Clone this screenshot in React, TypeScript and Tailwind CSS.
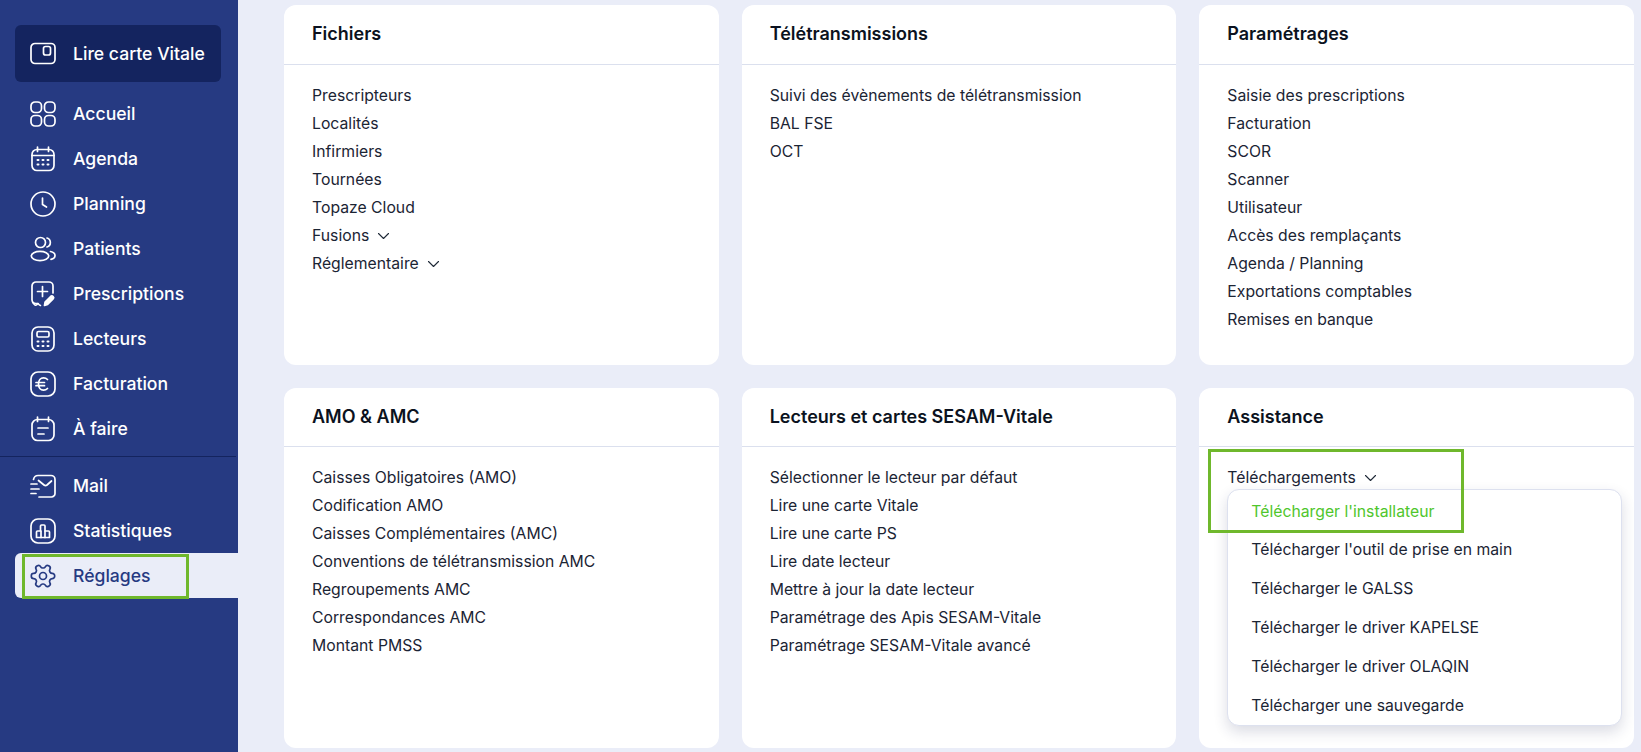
import React from "react";

const S = ({ children }: { children: React.ReactNode }) => (
  <svg width="26" height="26" viewBox="0 0 26 26" fill="none" stroke="currentColor" strokeWidth="1.7" strokeLinecap="round" strokeLinejoin="round" className="shrink-0">
    {children}
  </svg>
);

const icons: Record<string, React.ReactNode> = {
  card: (<S><rect x="1" y="2.500" width="24" height="20" rx="4" /><rect x="13.500" y="5.500" width="7" height="8.500" rx="2" /></S>),
  home: (<S><rect x="1" y="1" width="10.500" height="10.500" rx="4" /><rect x="14.500" y="1" width="10.500" height="10.500" rx="4" /><rect x="1" y="14.500" width="10.500" height="10.500" rx="4" /><rect x="14.500" y="14.500" width="10.500" height="10.500" rx="4" /></S>),
  agenda: (<S><rect x="2" y="3.500" width="22" height="21" rx="5" /><path d="M7.500 1v4.500M18.500 1v4.500M2 9.500h22" /><path d="M7.500 14h1M12.500 14h1M17.500 14h1M7.500 18.500h1M12.500 18.500h1M17.500 18.500h1" strokeWidth="2" /></S>),
  clock: (<S><circle cx="13" cy="13" r="12" /><path d="M12.500 7v6.500l4 2.500" /></S>),
  users: (<S><circle cx="10.500" cy="6.500" r="5" /><ellipse cx="10" cy="20" rx="8.700" ry="4.700" /><path d="M17 2a4.700 4.700 0 0 1 0 9M20.500 15.500c3 .6 4.500 2.200 4.500 4s-1.500 3.300-4 3.900" /></S>),
  rx: (<S><path d="M8 22.500H6A4 4 0 0 1 2 19V5a4 4 0 0 1 4-4h13a4 4 0 0 1 4 4v7" /><path d="M2.500 21c.6 1.500 1.500 2.500 2.500 3s2-.2 3-1.500c.8 1 1.500 1.700 2.500 2" strokeWidth="1.500" /><path d="M12.500 5.500v10M7.500 10.500h10" /><path d="M14.500 24.500l.6-3.500 5.500-5.500c.8-.7 1.800-.7 2.500 0s.7 1.800 0 2.500l-5.500 5.500z" fill="currentColor" /></S>),
  calc: (<S><rect x="2" y="1" width="22" height="24" rx="6" /><rect x="7" y="5.500" width="12" height="5.500" rx="1.500" /><path d="M7.500 15.500h1M12.500 15.500h1M17.500 15.500h1M7.500 20h1M12.500 20h1M17.500 20h1" strokeWidth="2" /></S>),
  euro: (<S><rect x="1" y="1" width="24" height="24" rx="7" /><path d="M17.500 8.500a5.500 5.500 0 0 0-4-1.700c-3 0-5 2.700-5 6.200s2 6.200 5 6.200a5.500 5.500 0 0 0 4-1.700M6 11.500h8.500M6 14.700h8.500" /></S>),
  todo: (<S><rect x="2" y="3.500" width="22" height="21" rx="5.500" /><path d="M7.500 1v4.500M18.500 1v4.500M8 12h10M8 18h6" /></S>),
  mail: (<S><path d="M3.500 6.500C4 4 5.500 2.500 8 2.500h13A4 4 0 0 1 25 6.500v14a3.500 3.500 0 0 1-3.500 3.500H9" /><path d="M8.500 7.500l5.500 4.500c1 .8 2 .8 3 0l4.500-4" /><path d="M1 11h6M1 16h8M1 20.500h5" /></S>),
  stats: (<S><rect x="1" y="1" width="24" height="24" rx="7" /><path d="M6.500 19.500h13v-5.500a1 1 0 0 0-1-1h-3.500V8a1 1 0 0 0-1-1h-2.500a1 1 0 0 0-1 1v5H7.500a1 1 0 0 0-1 1z" /><path d="M11 13v6.500M15 13v6.500" /></S>),
  gear: (<svg width="28" height="28" viewBox="0 0 24 24" fill="none" stroke="currentColor" strokeWidth="1.450" strokeLinecap="round" strokeLinejoin="round" className="-mx-px shrink-0"><g transform="rotate(90 12 12)"><circle cx="12" cy="12" r="3" /><path d="M12.220 2h-.44a2 2 0 0 0-2 2v.18a2 2 0 0 1-1 1.730l-.43.25a2 2 0 0 1-2 0l-.15-.08a2 2 0 0 0-2.730.73l-.22.38a2 2 0 0 0 .73 2.730l.15.1a2 2 0 0 1 1 1.720v.51a2 2 0 0 1-1 1.740l-.15.09a2 2 0 0 0-.73 2.730l.22.38a2 2 0 0 0 2.730.73l.15-.08a2 2 0 0 1 2 0l.43.25a2 2 0 0 1 1 1.730V20a2 2 0 0 0 2 2h.44a2 2 0 0 0 2-2v-.18a2 2 0 0 1 1-1.730l.43-.25a2 2 0 0 1 2 0l.15.08a2 2 0 0 0 2.730-.73l.22-.39a2 2 0 0 0-.73-2.730l-.15-.08a2 2 0 0 1-1-1.740v-.5a2 2 0 0 1 1-1.740l.15-.09a2 2 0 0 0 .73-2.730l-.22-.38a2 2 0 0 0-2.730-.73l-.15.08a2 2 0 0 1-2 0l-.43-.25a2 2 0 0 1-1-1.730V4a2 2 0 0 0-2-2z" /></g></svg>),
};

const Chevron = ({ className = "" }: { className?: string }) => (
  <svg width="13" height="8" viewBox="0 0 13 8" fill="none" stroke="#1f2937" strokeWidth="1.100" strokeLinecap="round" strokeLinejoin="round" className={className}>
    <path d="M1.500 1.500l5 5 5-5" />
  </svg>
);

const Item = ({ icon, label }: { icon: string; label: string }) => (
  <a className="flex h-[45px] items-center gap-[17px] pl-[30px] text-[17.6px] font-medium text-white">
    {icons[icon]}
    <span className="pt-[2px]">{label}</span>
  </a>
);

const Row = ({ label, chevron }: { label: string; chevron?: boolean }) => (
  <li className="flex h-7 items-center">
    <span>{label}</span>
    {chevron && <Chevron className="ml-2" />}
  </li>
);

const Card = ({ title, children }: { title: string; children: React.ReactNode }) => (
  <section className="relative h-[360px] rounded-xl bg-white">
    <h2 className="flex h-[59.2px] items-center border-b border-[#dbe0ee] pb-[2px] pl-7 text-[18px] font-semibold text-[#0b1220]">{title}</h2>
    {children}
  </section>
);

const List = ({ items }: { items: (string | [string])[] }) => (
  <ul className="pl-7 pt-[17px] text-[15.75px] text-[#1b2434]">
    {items.map((it) => (typeof it === "string" ? <Row key={it} label={it} /> : <Row key={it[0]} label={it[0]} chevron />))}
  </ul>
);

const downloads = [
  "Télécharger l'installateur",
  "Télécharger l'outil de prise en main",
  "Télécharger le GALSS",
  "Télécharger le driver KAPELSE",
  "Télécharger le driver OLAQIN",
  "Télécharger une sauvegarde",
];

export default function App() {
  return (
    <div className="flex h-[752px] w-[1641px] overflow-hidden bg-[#eaedf8] font-['Inter',sans-serif]">
      <aside className="w-[238px] shrink-0 bg-[#263a82] pt-[25px]">
        <div className="ml-[15px] flex h-[57px] w-[206px] items-center gap-[17px] rounded-md bg-[#14245f] pl-[15px] text-[17.6px] font-medium text-white">
          {icons.card}
          <span className="pt-[2px]">Lire carte Vitale</span>
        </div>
        <nav className="mt-[9px]">
          <Item icon="home" label="Accueil" />
          <Item icon="agenda" label="Agenda" />
          <Item icon="clock" label="Planning" />
          <Item icon="users" label="Patients" />
          <Item icon="rx" label="Prescriptions" />
          <Item icon="calc" label="Lecteurs" />
          <Item icon="euro" label="Facturation" />
          <Item icon="todo" label="À faire" />
          <div className="mb-[6px] mr-[2px] mt-[5px] h-px bg-[#14245f]" />
          <Item icon="mail" label="Mail" />
          <Item icon="stats" label="Statistiques" />
          <div className="relative ml-[15px] flex h-[45px] items-center gap-[17px] rounded-l-md bg-[#eaedf8] pl-[15px] text-[17.6px] font-medium text-[#263a82]">
            {icons.gear}
            <span className="pt-[2px]">Réglages</span>
            <div className="absolute left-[7px] top-px h-[45px] w-[167px] border-[3px] border-[#6fb82c]" />
          </div>
        </nav>
      </aside>
      <main className="grid flex-1 grid-cols-3 content-start gap-x-[23px] gap-y-[22.6px] pl-[46px] pr-[7px] pt-[5.4px]">
        <Card title="Fichiers">
          <List items={["Prescripteurs", "Localités", "Infirmiers", "Tournées", "Topaze Cloud", ["Fusions"], ["Réglementaire"]]} />
        </Card>
        <Card title="Télétransmissions">
          <List items={["Suivi des évènements de télétransmission", "BAL FSE", "OCT"]} />
        </Card>
        <Card title="Paramétrages">
          <List items={["Saisie des prescriptions", "Facturation", "SCOR", "Scanner", "Utilisateur", "Accès des remplaçants", "Agenda / Planning", "Exportations comptables", "Remises en banque"]} />
        </Card>
        <Card title="AMO & AMC">
          <List items={["Caisses Obligatoires (AMO)", "Codification AMO", "Caisses Complémentaires (AMC)", "Conventions de télétransmission AMC", "Regroupements AMC", "Correspondances AMC", "Montant PMSS"]} />
        </Card>
        <Card title="Lecteurs et cartes SESAM-Vitale">
          <List items={["Sélectionner le lecteur par défaut", "Lire une carte Vitale", "Lire une carte PS", "Lire date lecteur", "Mettre à jour la date lecteur", "Paramétrage des Apis SESAM-Vitale", "Paramétrage SESAM-Vitale avancé"]} />
        </Card>
        <Card title="Assistance">
          <List items={[["Téléchargements"]]} />
          <div className="absolute left-7 top-[101px] flex h-[237px] w-[395px] flex-col rounded-xl border border-[#dde1ef] bg-white pl-[23px] pt-[2px] text-[15.75px] text-[#1b2434] shadow-[0_6px_14px_rgba(30,40,90,0.16)]">
            {downloads.map((d, i) => (
              <div key={d} className={`flex flex-1 items-center ${i === 0 ? "text-[#4fc62c]" : ""}`}>{d}</div>
            ))}
          </div>
          <div className="absolute left-[9px] top-[61px] h-[84px] w-[256px] border-[3px] border-[#6fb82c]" />
        </Card>
      </main>
    </div>
  );
}
